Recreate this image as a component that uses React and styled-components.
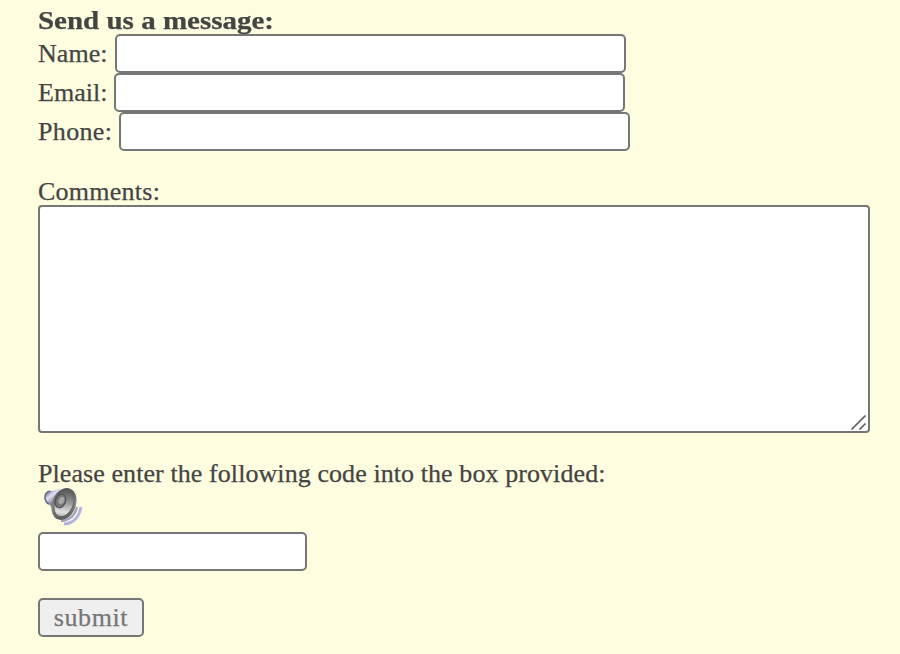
import styled, { createGlobalStyle } from 'styled-components';

const GlobalStyle = createGlobalStyle`
  * {
    box-sizing: border-box;
  }
  body {
    margin: 0;
    background-color: #fefddf;
    color: #444;
    font-family: 'Liberation Serif', serif;
    font-size: 26px;
    line-height: 27px;
    -webkit-text-stroke: 0.25px currentColor;
  }
`;

const Form = styled.form`
  display: flex;
  flex-direction: column;
  align-items: flex-start;
  height: 654px;
  padding: 7px 30px 0 38px;
  overflow: hidden;
`;

const Title = styled.div`
  height: 27px;
  font-weight: bold;
  white-space: nowrap;
  transform: scaleX(1.115);
  transform-origin: left;
`;

const Row = styled.div`
  display: flex;
  height: 39px;
`;

const Label = styled.label`
  display: block;
  flex: none;
  width: ${({ $width }) => ($width ? `${$width}px` : 'auto')};
  height: 27px;
  margin-top: ${({ $top }) => $top || 0}px;
  white-space: nowrap;
  letter-spacing: ${({ $spacing }) => $spacing || 0}px;
`;

const Input = styled.input`
  display: block;
  width: ${({ $width }) => $width}px;
  height: 39px;
  padding: 2px 6px;
  border: 2px solid #767676;
  border-radius: 5px;
  background-color: #fff;
  font: inherit;
  outline: none;
`;

const CommentBox = styled.div`
  position: relative;
  width: 832px;
  height: 228px;
  svg {
    position: absolute;
    right: 3px;
    bottom: 2px;
  }
`;

const TextArea = styled.textarea`
  display: block;
  width: 100%;
  height: 100%;
  padding: 4px;
  border: 2px solid #767676;
  border-radius: 4px;
  background-color: #fff;
  font: inherit;
  resize: none;
  outline: none;
`;

const AudioLink = styled.div`
  height: 45px;
  padding-left: 5px;
  svg {
    display: block;
  }
`;

const Submit = styled.button`
  width: 106px;
  height: 39px;
  margin-top: 27px;
  padding: 0;
  border: 2px solid #767676;
  border-radius: 5px;
  background-color: #efefef;
  color: #757575;
  font: inherit;
  letter-spacing: 0.6px;
`;

const fields = [
  { id: 'name', label: 'Name:', width: 77, spacing: 0.05 },
  { id: 'email', label: 'Email:', width: 76, spacing: 0.05 },
  { id: 'phone', label: 'Phone:', width: 81, spacing: 0.35 },
];

const ResizeGrip = () => (
  <svg width='18' height='18' viewBox='0 0 18 18' fill='none'>
    <path d='M2.5 16.5L16.5 2.5M10.5 16.5L16.5 10.5' stroke='#5c5c5c' strokeWidth='1.7' />
  </svg>
);

const Speaker = () => (
  <svg width='42' height='40' viewBox='0 0 42 40' fill='none'>
    <defs>
      <linearGradient id='magnet' x1='1' y1='5' x2='12' y2='19' gradientUnits='userSpaceOnUse'>
        <stop offset='0' stopColor='#54547c' />
        <stop offset='0.4' stopColor='#e2e2f4' />
        <stop offset='1' stopColor='#505063' />
      </linearGradient>
      <linearGradient id='rim' x1='12' y1='2' x2='30' y2='33' gradientUnits='userSpaceOnUse'>
        <stop offset='0' stopColor='#484848' />
        <stop offset='0.5' stopColor='#8c8c8c' />
        <stop offset='1' stopColor='#505050' />
      </linearGradient>
      <linearGradient id='cone' x1='17' y1='3' x2='24' y2='31' gradientUnits='userSpaceOnUse'>
        <stop offset='0' stopColor='#555' />
        <stop offset='0.45' stopColor='#999' />
        <stop offset='0.8' stopColor='#e2e2e2' />
        <stop offset='1' stopColor='#999' />
      </linearGradient>
      <filter id='soft' x='-10%' y='-10%' width='120%' height='120%'>
        <feGaussianBlur stdDeviation='0.6' />
      </filter>
    </defs>
    <g filter='url(#soft)'>
      <path d='M21 37Q35 36 38 20' stroke='#b2b2df' strokeWidth='3' />
      <path d='M18 34Q31 33 34 20' stroke='#a2a2cb' strokeWidth='2.4' />
      <path d='M2 7Q5 3 10 4L18 1Q9 15 13 28L7 18Q0 16 2 7Z' fill='url(#magnet)' />
      <path d='M7 4Q2 5 2 11Q3 16 6 17' stroke='#666690' strokeWidth='1.5' />
      <ellipse cx='21' cy='17' rx='11.8' ry='16.5' transform='rotate(22 21 17)' fill='url(#rim)' />
      <ellipse cx='21' cy='16.5' rx='9.3' ry='13.7' transform='rotate(22 21 16.5)' fill='url(#cone)' stroke='#606060' />
      <ellipse cx='17.5' cy='14' rx='5' ry='7' transform='rotate(24 17.5 14)' fill='#777' stroke='#4b4b50' />
      <ellipse cx='18.5' cy='13.5' rx='2.7' ry='3.7' transform='rotate(24 18.5 13.5)' fill='#a7a7a7' />
    </g>
  </svg>
);

const App = () => {
  return (
    <>
      <GlobalStyle />
      <Form onSubmit={(e) => e.preventDefault()}>
        <Title>Send us a message:</Title>
        {fields.map(({ id, label, width, spacing }) => (
          <Row key={id}>
            <Label htmlFor={id} $width={width} $spacing={spacing} $top={6}>
              {label}
            </Label>
            <Input id={id} $width={511} />
          </Row>
        ))}
        <Label htmlFor='comments' $spacing={0.25} $top={27}>
          Comments:
        </Label>
        <CommentBox>
          <TextArea id='comments' />
          <ResizeGrip />
        </CommentBox>
        <Label htmlFor='code' $spacing={0.08} $top={27}>
          Please enter the following code into the box provided:
        </Label>
        <AudioLink>
          <Speaker />
        </AudioLink>
        <Input id='code' $width={269} />
        <Submit>submit</Submit>
      </Form>
    </>
  );
};

export default App;
